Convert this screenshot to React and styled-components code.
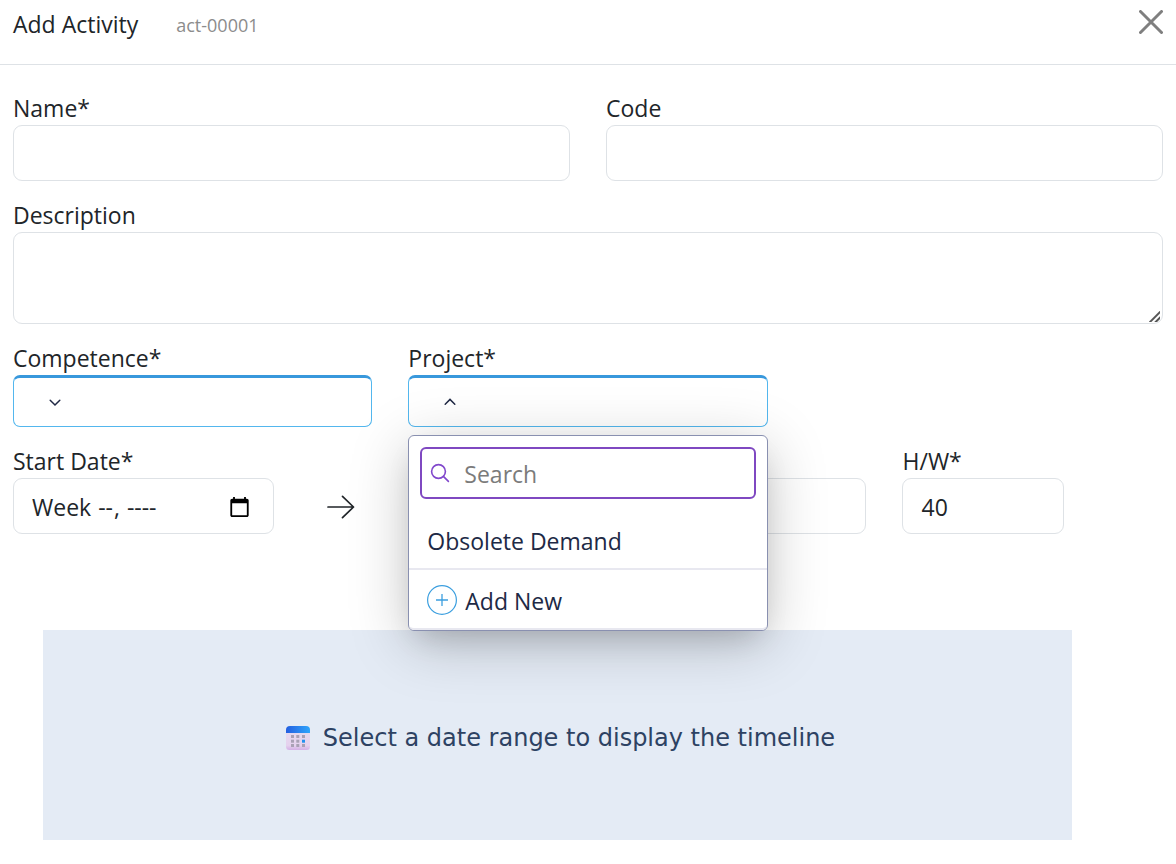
import React, { useState } from "react";
import styled, { createGlobalStyle } from "styled-components";

const GlobalStyle = createGlobalStyle`
  *, *::before, *::after {
    box-sizing: border-box;
  }

  body {
    margin: 0;
    background: #fff;
    color: #212529;
    font-family: "Open Sans", "Noto Sans", sans-serif;
    font-size: 23px;
    line-height: 36px;
  }

  button, input, textarea {
    font: inherit;
    color: inherit;
  }
`;

const Header = styled.header`
  display: flex;
  align-items: center;
  padding: 4px 13px 20px;
  border-bottom: 1px solid #dee2e6;
`;

const Title = styled.h1`
  margin: 0;
  font-size: 23px;
  font-weight: 400;
  line-height: 40px;
`;

const ActivityId = styled.span`
  margin-left: 38px;
  padding-top: 2px;
  color: #8c8c8c;
  font-size: 18px;
`;

const CloseButton = styled.button`
  display: flex;
  margin-left: auto;
  padding: 0 0 4px;
  border: none;
  background: none;
  color: #7f7f7f;
  cursor: pointer;
`;

const Form = styled.form`
  display: grid;
  grid-template-columns: repeat(12, 1fr);
  gap: 15px 36px;
  align-items: end;
  padding: 24px 13px 0;
`;

const Field = styled.div`
  position: relative;
  display: flex;
  flex-direction: column;
  grid-column: span ${(props) => props.$span};
`;

const Label = styled.label`
  padding-top: 2px;
  line-height: 34px;
`;

const Input = styled.input`
  width: 100%;
  height: 56px;
  padding: 10px 20px 8px 18px;
  border: 1px solid #dee2e6;
  border-radius: 9px;
  background: #fff;
  outline: none;
`;

const TextArea = styled.textarea`
  display: block;
  width: 100%;
  height: 92px;
  padding: 9px 18px;
  border: 1px solid #dee2e6;
  border-radius: 9px;
  outline: none;
  resize: vertical;

  &::-webkit-resizer {
    background: linear-gradient(
        135deg,
        transparent 7px,
        #555 8px,
        #555 9px,
        transparent 10px,
        transparent 11px,
        #555 12px,
        #555 13px,
        transparent 14px
      )
      2px 3px / 11px 11px no-repeat;
  }
`;

const ArrowCell = styled.div`
  display: flex;
  align-items: center;
  grid-column: span 3;
  height: 56px;
  padding-top: 2px;
  padding-left: 17px;
`;

const SelectButton = styled.button`
  display: flex;
  align-items: center;
  width: 100%;
  height: 52px;
  padding: 0 35px;
  border: 1px solid #53b7ee;
  border-top: 3px solid #3898dc;
  border-radius: 7px;
  background: #fff;
  color: #202945;
  cursor: pointer;
`;

const Menu = styled.div`
  position: absolute;
  z-index: 1;
  top: calc(100% + 8px);
  left: 0;
  right: 0;
  border: 1px solid #8990b0;
  border-radius: 6px;
  background: #fff;
  color: #202945;
  box-shadow: 0 12px 60px rgba(0, 0, 0, 0.22),
    0 14px 28px -10px rgba(0, 0, 0, 0.16);
`;

const SearchBox = styled.label`
  display: flex;
  align-items: center;
  gap: 14px;
  height: 52px;
  margin: 11px;
  padding: 0 8px;
  border: 2px solid #7f48c1;
  border-radius: 6px;
  color: #8148cc;
`;

const SearchInput = styled.input`
  flex: 1;
  min-width: 0;
  padding: 2px 0 0;
  border: none;
  background: none;
  color: #202945;
  outline: none;

  &::placeholder {
    color: #7b7b7b;
    opacity: 1;
  }
`;

const MenuItem = styled.button`
  display: flex;
  align-items: center;
  gap: 8px;
  width: 100%;
  height: 60px;
  padding: 2px 18px 0;
  border: none;
  border-bottom: 2px solid #e8e8f0;
  background: none;
  text-align: left;
  cursor: pointer;

  &:last-child {
    border-radius: 0 0 5px 5px;
  }
`;

const ItemText = styled.span`
  padding-top: 2px;
`;

const Timeline = styled.section`
  display: flex;
  align-items: center;
  justify-content: center;
  gap: 13px;
  height: 210px;
  margin: 96px 104px 24px 43px;
  padding: 5px 0 0 6px;
  background: #e4ebf5;
  color: #2d4263;
  font-family: "DejaVu Sans", sans-serif;
  font-size: 24px;
`;

const Message = styled.p`
  margin: 0;
`;

const CloseIcon = () => (
  <svg width="24" height="24" viewBox="0 0 24 24" fill="none" stroke="currentColor" strokeWidth="3" strokeLinecap="round">
    <path d="M1.5 1.5l21 21M22.5 1.5l-21 21" />
  </svg>
);

const Chevron = ({ up }) => (
  <svg width="12" height="12" viewBox="0 0 12 12" fill="none" stroke="currentColor" strokeWidth="1.5" strokeLinecap="round">
    <path d={up ? "M1.2 8.2L6 3.4l4.8 4.8" : "M1.2 4.2L6 9l4.8-4.8"} />
  </svg>
);

const ArrowIcon = () => (
  <svg width="28" height="24" viewBox="0 0 28 24" fill="none" stroke="#212529" strokeWidth="1.7" strokeLinecap="round" strokeLinejoin="round">
    <path d="M1 12h25.5M15.5 1.3L26.5 12l-11 10.7" />
  </svg>
);

const SearchIcon = () => (
  <svg width="20" height="20" viewBox="0 0 20 20" fill="none" stroke="currentColor" strokeWidth="1.6" strokeLinecap="round">
    <circle cx="8.5" cy="8.5" r="6.9" />
    <path d="M13.4 13.4l5 5" />
  </svg>
);

const PlusCircleIcon = () => (
  <svg width="30" height="30" viewBox="0 0 30 30" fill="none" stroke="#3c9fdf">
    <circle cx="15" cy="15" r="14.4" strokeWidth="1.2" />
    <path d="M9 15h12M15 9v12" strokeWidth="1.3" />
  </svg>
);

const CalendarIcon = () => (
  <svg width="24" height="24" viewBox="0 0 24 24">
    <defs>
      <linearGradient id="calendar-page" x1="0" y1="0" x2="0" y2="1">
        <stop offset="0" stopColor="#e6dcee" />
        <stop offset="0.8" stopColor="#e5d2ee" />
        <stop offset="1" stopColor="#d4b0e6" />
      </linearGradient>
      <linearGradient id="calendar-top">
        <stop offset="0" stopColor="#235fe0" />
        <stop offset="1" stopColor="#2fa5fb" />
      </linearGradient>
    </defs>
    <rect y="1" width="24" height="23" rx="3.5" fill="url(#calendar-page)" />
    <path d="M0 7V4a4 4 0 0 1 4-4h16a4 4 0 0 1 4 4v3z" fill="url(#calendar-top)" />
    {[9, 13.7, 18].map((y) =>
      [5, 10.3, 16].map((x) => (
        <rect
          key={`${x}-${y}`}
          x={x}
          y={y}
          width="3"
          height="3"
          fill={x === 16 && y === 13.7 ? "#2492ee" : "#aaa1b5"}
        />
      ))
    )}
  </svg>
);

const App = () => {
  const [projectOpen, setProjectOpen] = useState(true);
  const [search, setSearch] = useState("");
  const projects = ["Obsolete Demand"].filter((project) =>
    project.toLowerCase().includes(search.toLowerCase())
  );

  return (
    <>
      <GlobalStyle />
      <Header>
        <Title>Add Activity</Title>
        <ActivityId>act-00001</ActivityId>
        <CloseButton type="button" aria-label="Close">
          <CloseIcon />
        </CloseButton>
      </Header>
      <main>
        <Form onSubmit={(e) => e.preventDefault()}>
          <Field $span={6}>
            <Label htmlFor="name">Name*</Label>
            <Input id="name" type="text" />
          </Field>
          <Field $span={6}>
            <Label htmlFor="code">Code</Label>
            <Input id="code" type="text" />
          </Field>
          <Field $span={12}>
            <Label htmlFor="description">Description</Label>
            <TextArea id="description" />
          </Field>
          <Field $span={4}>
            <Label htmlFor="competence">Competence*</Label>
            <SelectButton id="competence" type="button" aria-haspopup="listbox">
              <Chevron />
            </SelectButton>
          </Field>
          <Field $span={4}>
            <Label htmlFor="project">Project*</Label>
            <SelectButton
              id="project"
              type="button"
              aria-haspopup="listbox"
              aria-expanded={projectOpen}
              onClick={() => setProjectOpen(!projectOpen)}
            >
              <Chevron up={projectOpen} />
            </SelectButton>
            {projectOpen && (
              <Menu>
                <SearchBox>
                  <SearchIcon />
                  <SearchInput
                    type="text"
                    placeholder="Search"
                    aria-label="Search"
                    value={search}
                    onChange={(e) => setSearch(e.target.value)}
                  />
                </SearchBox>
                {projects.map((project) => (
                  <MenuItem key={project} type="button">
                    <ItemText>{project}</ItemText>
                  </MenuItem>
                ))}
                <MenuItem type="button">
                  <PlusCircleIcon />
                  <ItemText>Add New</ItemText>
                </MenuItem>
              </Menu>
            )}
          </Field>
          <Field $span={4} />
          <Field $span={3}>
            <Label htmlFor="start">Start Date*</Label>
            <Input id="start" type="week" />
          </Field>
          <ArrowCell>
            <ArrowIcon />
          </ArrowCell>
          <Field $span={3}>
            <Input type="text" aria-label="End Date" />
          </Field>
          <Field $span={2}>
            <Label htmlFor="hours">H/W*</Label>
            <Input id="hours" type="text" inputMode="numeric" defaultValue="40" />
          </Field>
        </Form>
        <Timeline>
          <CalendarIcon />
          <Message>Select a date range to display the timeline</Message>
        </Timeline>
      </main>
    </>
  );
};

export default App;
